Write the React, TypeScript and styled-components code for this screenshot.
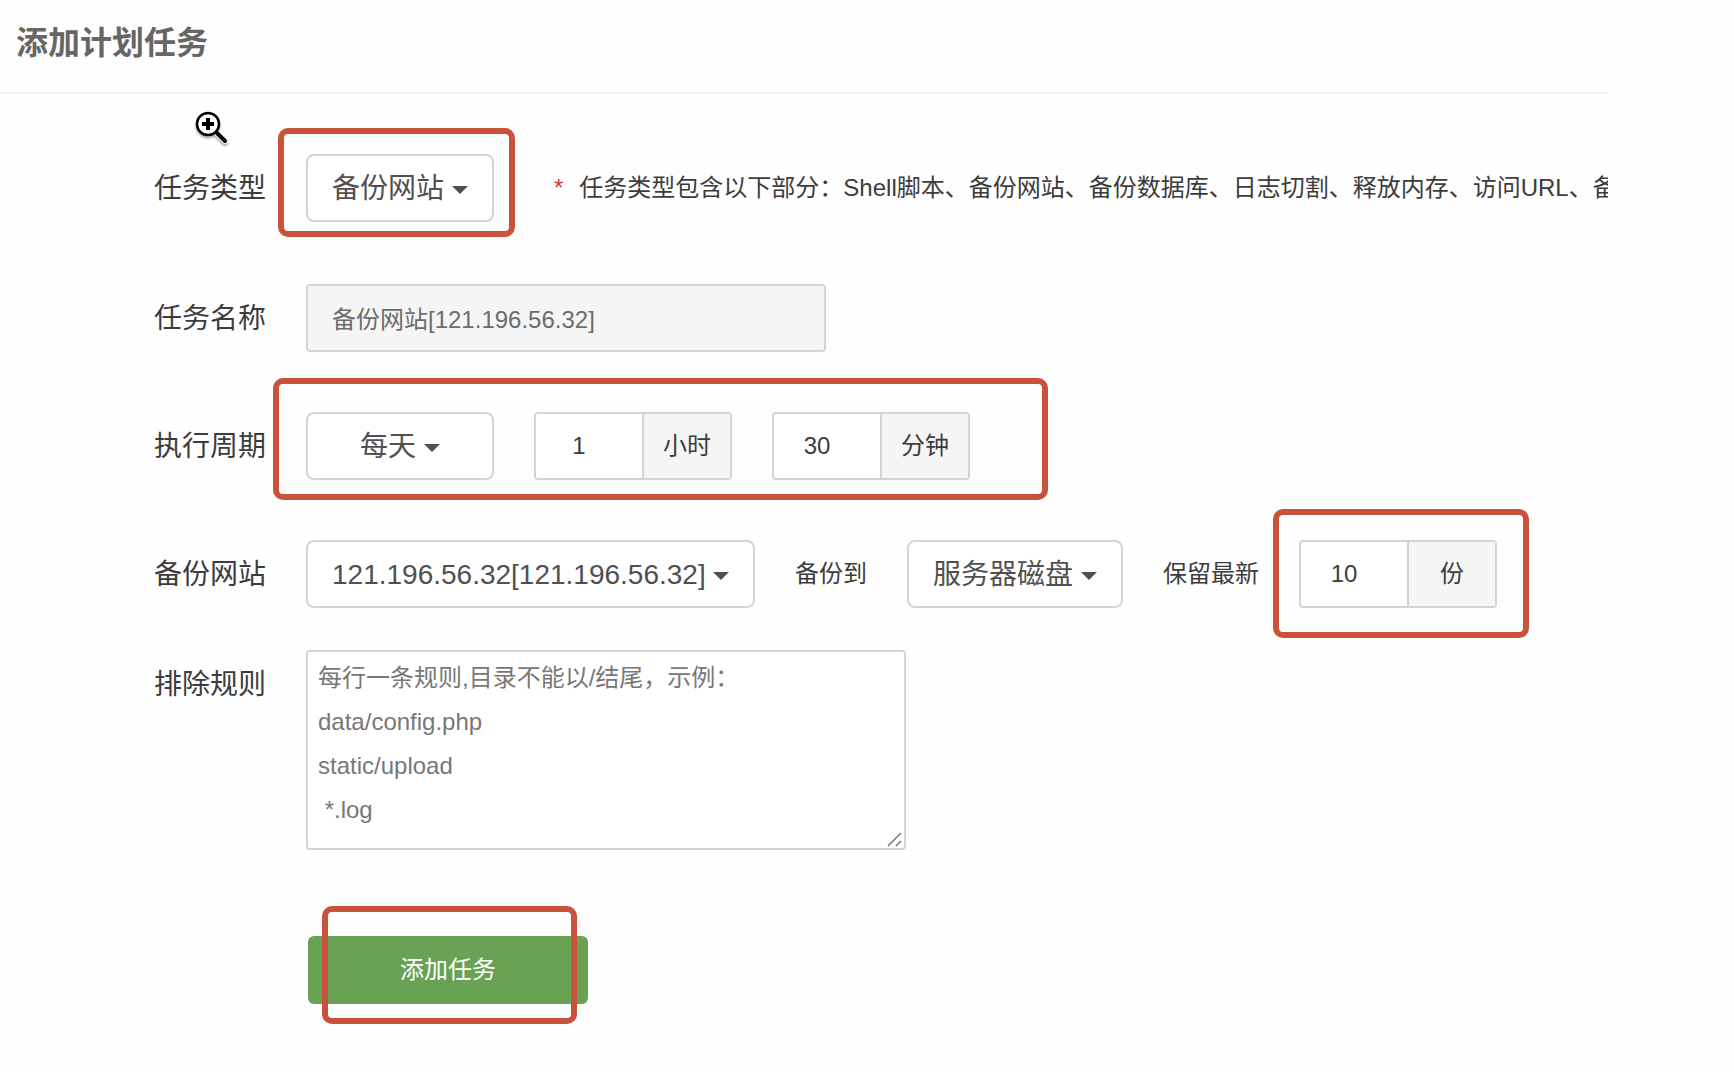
import React from "react";
import styled, { createGlobalStyle } from "styled-components";

const GlobalStyle = createGlobalStyle`
  *, *::before, *::after { box-sizing: border-box; }
  body {
    margin: 0;
    background: #fefefe;
    color: #3c3c3c;
    font-family: "Liberation Sans", "Noto Sans CJK SC", sans-serif;
    font-size: 24px;
    line-height: 36px;
  }
  button, input, select, textarea { font: inherit; color: inherit; }
`;

const Panel = styled.main`
  position: relative;
  margin-right: 126px;
  padding-bottom: 60px;
  overflow: hidden;
`;

const Header = styled.header`
  padding: 20px 16px 26px;
  border-bottom: 2px solid #f1f1f1;
`;

const Title = styled.h1`
  margin: 0;
  color: #666;
  font-size: 32px;
  font-weight: 700;
  line-height: 46px;
`;

const Form = styled.form`
  display: flex;
  flex-direction: column;
`;

const Row = styled.div<{ $space?: number; $top?: boolean }>`
  display: flex;
  align-items: ${(p) => (p.$top ? "flex-start" : "center")};
  gap: 40px;
  margin-top: ${(p) => p.$space ?? 60}px;
`;

const Label = styled.label`
  flex: 0 0 266px;
  height: 68px;
  font-size: 28px;
  line-height: 70px;
  text-align: right;
`;

const Fields = styled.div`
  position: relative;
  display: flex;
  align-items: center;
  gap: 40px;
`;

const SelectBox = styled.div`
  display: inline-grid;
  align-items: center;
`;

const Select = styled.select<{ $inset: number }>`
  grid-area: 1 / 1;
  appearance: none;
  height: 68px;
  padding: 2px ${(p) => p.$inset + 23}px 0 ${(p) => p.$inset}px;
  border: 2px solid #d4d4d4;
  border-radius: 8px;
  background: #fff;
  color: #505050;
  font-size: 28px;
`;

const Caret = styled.span<{ $inset: number }>`
  grid-area: 1 / 1;
  justify-self: end;
  margin: 4px ${(p) => p.$inset + 2}px 0 0;
  border: 8px solid transparent;
  border-top-color: #505050;
  border-bottom-width: 0;
  pointer-events: none;
`;

const TextInput = styled.input`
  width: 520px;
  height: 68px;
  padding: 0 24px 2px;
  border: 2px solid #d4d4d4;
  border-radius: 4px;
  background: #f5f5f5;
  color: #6c6c6c;
`;

const Group = styled.div`
  display: flex;
  width: 198px;
  height: 68px;
  border: 2px solid #d4d4d4;
  border-radius: 4px;
  background: #fff;
`;

const GroupInput = styled.input`
  width: 108px;
  padding: 0 20px 0 0;
  border: 0;
  border-right: 2px solid #d4d4d4;
  background: transparent;
  text-align: center;
`;

const Unit = styled.span`
  flex: 1;
  background: #f5f5f5;
  line-height: 64px;
  text-align: center;
`;

const Note = styled.p`
  display: flex;
  gap: 16px;
  margin: 0 0 0 20px;
  white-space: nowrap;
`;

const Star = styled.span`
  color: #d9372c;
`;

const RulesBox = styled.div`
  position: relative;
`;

const Rules = styled.textarea`
  display: block;
  width: 600px;
  height: 200px;
  padding: 4px 10px;
  border: 2px solid #d4d4d4;
  border-radius: 4px;
  background: #fff;
  line-height: 44px;
  overflow: hidden;
  &::placeholder { color: #777; }
  &::-webkit-resizer { background: transparent; }
`;

const Grip = styled.svg`
  position: absolute;
  right: 2px;
  bottom: 2px;
  pointer-events: none;
`;

const Submit = styled.button`
  width: 280px;
  height: 68px;
  margin-left: 308px;
  border: 0;
  border-radius: 6px;
  background: #69a155;
  color: #fff;
`;

const Actions = styled.div`
  position: relative;
  margin-top: 86px;
`;

/* Red frame drawn over the controls that the guide points out */
const Mark = styled.span<{ $x: number; $y: number; $w: number; $h: number }>`
  position: absolute;
  left: ${(p) => p.$x}px;
  top: ${(p) => p.$y}px;
  width: ${(p) => p.$w}px;
  height: ${(p) => p.$h}px;
  border: 6px solid #c9523a;
  border-radius: 10px;
  pointer-events: none;
`;

const Anchor = styled.div`
  position: relative;
`;

const Pointer = styled.svg`
  position: absolute;
  left: 192px;
  top: 108px;
  filter: drop-shadow(0 2px 1px rgba(0, 0, 0, 0.35));
`;

function Dropdown({ id, value, inset = 24 }: { id: string; value: string; inset?: number }) {
  return (
    <SelectBox>
      <Select id={id} $inset={inset} defaultValue={value}>
        <option>{value}</option>
      </Select>
      <Caret $inset={inset} />
    </SelectBox>
  );
}

function Amount({ id, label, value, unit }: { id: string; label: string; value: string; unit: string }) {
  return (
    <Group>
      <GroupInput id={id} aria-label={label} inputMode="numeric" defaultValue={value} />
      <Unit>{unit}</Unit>
    </Group>
  );
}

const rulesHint = "每行一条规则,目录不能以/结尾，示例：\ndata/config.php\nstatic/upload\n *.log";

export default function App() {
  return (
    <>
      <GlobalStyle />
      <Panel>
        <Header>
          <Title>添加计划任务</Title>
        </Header>
        <Form onSubmit={(e) => e.preventDefault()}>
          <Row>
            <Label htmlFor="type">任务类型</Label>
            <Fields>
              <Dropdown id="type" value="备份网站" />
              <Note>
                <Star>*</Star>
                <span>任务类型包含以下部分：Shell脚本、备份网站、备份数据库、日志切割、释放内存、访问URL、备</span>
              </Note>
              <Mark $x={-28} $y={-26} $w={237} $h={109} />
            </Fields>
          </Row>
          <Row $space={62}>
            <Label htmlFor="name">任务名称</Label>
            <TextInput id="name" readOnly value="备份网站[121.196.56.32]" />
          </Row>
          <Row>
            <Label htmlFor="cycle">执行周期</Label>
            <Fields>
              <Dropdown id="cycle" value="每天" inset={52} />
              <Amount id="hour" label="小时" value="1" unit="小时" />
              <Amount id="minute" label="分钟" value="30" unit="分钟" />
              <Mark $x={-33} $y={-34} $w={775} $h={122} />
            </Fields>
          </Row>
          <Row>
            <Label htmlFor="site">备份网站</Label>
            <Fields>
              <Dropdown id="site" value="121.196.56.32[121.196.56.32]" />
              <label htmlFor="target">备份到</label>
              <Dropdown id="target" value="服务器磁盘" />
              <label htmlFor="keep">保留最新</label>
              <Anchor>
                <Amount id="keep" label="保留最新" value="10" unit="份" />
                <Mark $x={-26} $y={-31} $w={256} $h={129} />
              </Anchor>
            </Fields>
          </Row>
          <Row $space={42} $top>
            <Label htmlFor="rules">排除规则</Label>
            <RulesBox>
              <Rules id="rules" placeholder={rulesHint} />
              <Grip width="18" height="18" viewBox="0 0 18 18" aria-hidden="true">
                <path d="M2 16L15 3M10 16L15 11" stroke="#777" strokeWidth="1.5" />
              </Grip>
            </RulesBox>
          </Row>
          <Actions>
            <Submit type="submit">添加任务</Submit>
            <Mark $x={322} $y={-30} $w={255} $h={118} />
          </Actions>
        </Form>
        <Pointer width="40" height="40" viewBox="0 0 40 40" aria-hidden="true">
          <path d="M24 24L33 33" stroke="#fff" strokeWidth="6" strokeLinecap="round" />
          <path d="M23 23L33 33" stroke="#000" strokeWidth="4" strokeLinecap="round" />
          <circle cx="16" cy="16" r="11" fill="#fff" stroke="#000" strokeWidth="2.5" />
          <path d="M10 16H22M16 10V22" stroke="#000" strokeWidth="4" />
        </Pointer>
      </Panel>
    </>
  );
}
